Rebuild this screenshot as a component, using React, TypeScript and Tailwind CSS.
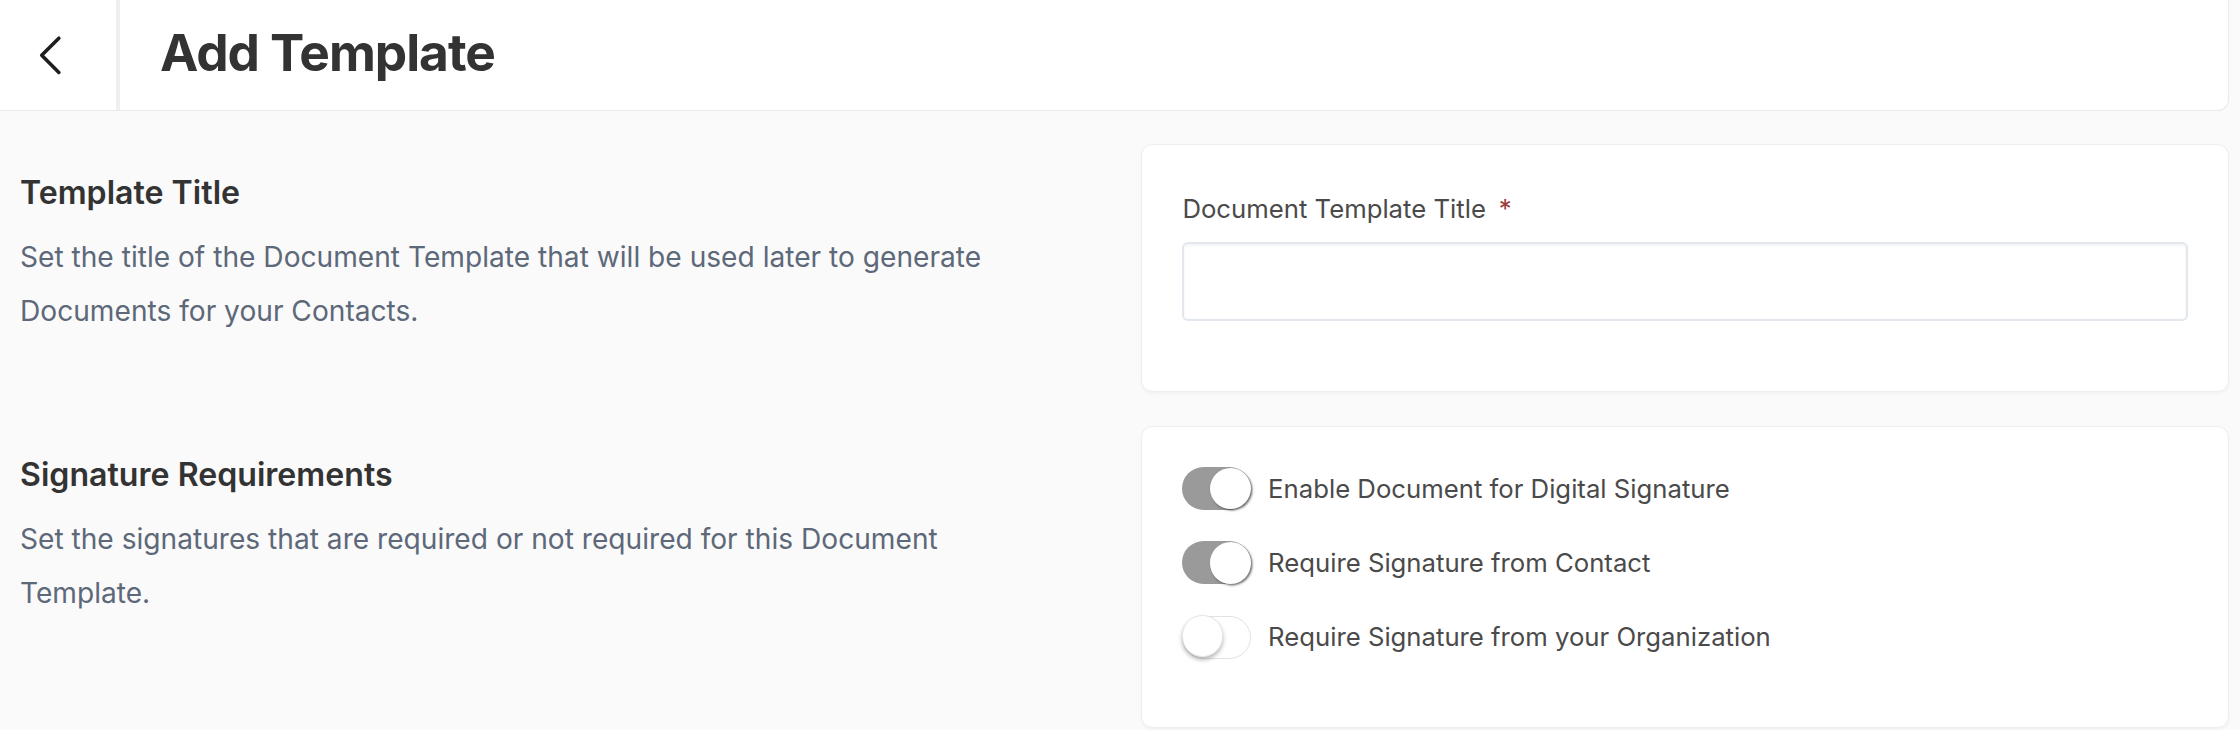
import { useState } from "react";
import { ChevronLeft } from "lucide-react";

type ToggleProps = { on: boolean; onChange: () => void; label: string };

function Toggle({ on, onChange, label }: ToggleProps) {
  return (
    <label className="flex cursor-pointer items-center gap-3">
      <button
        type="button"
        role="switch"
        aria-checked={on}
        onClick={onChange}
        className={
          on
            ? "relative h-[30px] w-12 shrink-0 rounded-full bg-[#9a9a9a]"
            : "relative h-[30px] w-12 shrink-0 rounded-full border border-[#e2e2e2] bg-white"
        }
      >
        <span
          className={
            on
              ? "absolute top-[0.5px] right-0 size-[29px] rounded-full bg-white shadow-[1px_1px_1.5px_rgba(0,0,0,0.55)]"
              : "absolute -top-px -left-px size-[29px] rounded-full border border-[#e6e6e6] bg-white shadow-[0_2px_3px_rgba(0,0,0,0.28)]"
          }
        />
      </button>
      <span className="text-lg text-[#4a4a4a]">{label}</span>
    </label>
  );
}

function SectionIntro({ title, children }: { title: string; children: string }) {
  return (
    <div className="pt-[18px] pr-12">
      <h2 className="text-[22.5px] leading-8 font-semibold text-[#333]">{title}</h2>
      <p className="mt-2.5 text-[19.7px] leading-[38px] text-[#5d6879]">{children}</p>
    </div>
  );
}

export default function App() {
  const [title, setTitle] = useState("");
  const [toggles, setToggles] = useState({ digital: true, contact: true, org: false });

  const flip = (key: keyof typeof toggles) =>
    setToggles((t) => ({ ...t, [key]: !t[key] }));

  return (
    <div className="h-[511px] overflow-hidden bg-[#fafafa] pr-2 font-['Inter',sans-serif] [zoom:1.42857]">
      {/* Top bar */}
      <header className="flex h-[78px] rounded-br-lg border-r border-b border-[#e9e9e9] bg-white">
        <button
          className="flex w-[84px] items-center border-r-[3px] border-[#efefef] pl-[11px] text-[#1f1f1f]"
          aria-label="Back"
        >
          <ChevronLeft size={48} strokeWidth={1.25} />
        </button>
        <h1 className="flex items-center pb-1 pl-7 text-4xl font-bold tracking-[-0.02em] text-[#333]">
          Add Template
        </h1>
      </header>

      <main className="flex flex-col gap-6 pt-[23px] pl-3.5">
        {/* Template title */}
        <section className="grid grid-cols-2 gap-6">
          <SectionIntro title="Template Title">
            Set the title of the Document Template that will be used later to generate Documents for your Contacts.
          </SectionIntro>
          <div className="rounded-lg border border-[#eeeeee] bg-white px-7 pt-[33px] pb-[49px] shadow-[0_1px_2px_rgba(0,0,0,0.03)]">
            <label className="block text-lg leading-6 text-[#4a4a4a]">
              Document Template Title <span className="ml-1 text-[#9b3b3b]">*</span>
            </label>
            <input
              value={title}
              onChange={(e) => setTitle(e.target.value)}
              className="mt-[11px] h-[55px] w-full rounded border-[1.5px] border-[#e3e7ee] px-4 text-lg text-[#333] shadow-[inset_0_1px_2px_rgba(0,0,0,0.06)] outline-none"
            />
          </div>
        </section>

        {/* Signature requirements */}
        <section className="grid grid-cols-2 gap-6">
          <SectionIntro title="Signature Requirements">
            Set the signatures that are required or not required for this Document Template.
          </SectionIntro>
          <div className="flex flex-col gap-[22px] rounded-lg border border-[#eeeeee] bg-white px-7 pt-7 pb-12 shadow-[0_1px_2px_rgba(0,0,0,0.03)]">
            <Toggle on={toggles.digital} onChange={() => flip("digital")} label="Enable Document for Digital Signature" />
            <Toggle on={toggles.contact} onChange={() => flip("contact")} label="Require Signature from Contact" />
            <Toggle on={toggles.org} onChange={() => flip("org")} label="Require Signature from your Organization" />
          </div>
        </section>
      </main>
    </div>
  );
}
